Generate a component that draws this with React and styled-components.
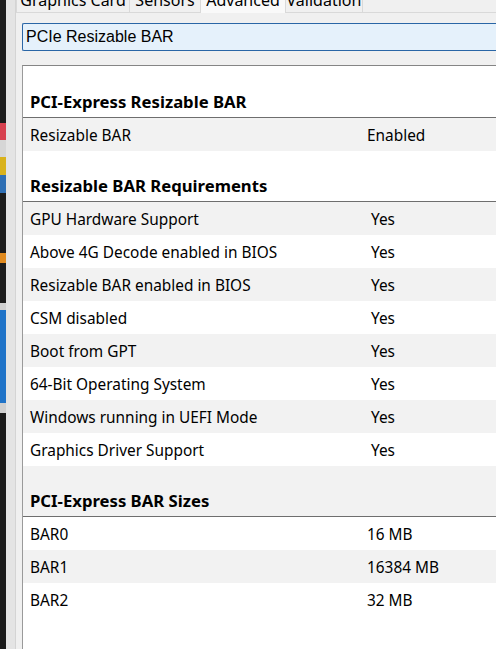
import React from "react";
import styled, { createGlobalStyle } from "styled-components";

const Global = createGlobalStyle`
  html, body { margin: 0; padding: 0; background: #f0f0f0; overflow: hidden; }
  body { width: 496px; height: 649px; font-family: "Noto Sans", "Segoe UI", sans-serif; color: #000; }
`;

const Screen = styled.div`
  display: flex;
  width: 496px;
  height: 649px;
  overflow: hidden;
`;

const Desktop = styled.div`
  width: 6px;
  flex: none;
  background: #1c1c1c;
  display: flex;
  flex-direction: column;
`;

const DesktopBlock = styled.div`
  flex: none;
  height: ${(p) => p.$h}px;
  background: ${(p) => p.$c};
`;

const Frame = styled.div`
  width: 9px;
  flex: none;
  background: #e4e4e4;
  border-right: 1px solid #d4d4d4;
`;

const Window = styled.div`
  flex: 1;
  min-width: 0;
  display: flex;
  flex-direction: column;
  background: #f0f0f0;
`;

const TabBar = styled.div`
  display: flex;
  height: 12px;
  border-bottom: 1px solid #d9d9d9;
  flex: none;
`;

const Tab = styled.div`
  flex: none;
  width: ${(p) => p.$w}px;
  height: ${(p) => (p.$active ? 13 : 12)}px;
  box-sizing: border-box;
  display: flex;
  align-items: flex-end;
  justify-content: center;
  padding-bottom: ${(p) => (p.$active ? 3 : 2)}px;
  background: ${(p) => (p.$active ? "#f9f9f9" : "#f0f0f0")};
  border-left: 1px solid #d9d9d9;
  border-right: ${(p) => (p.$last ? "1px solid #d9d9d9" : "none")};
  font-size: 16px;
  white-space: nowrap;
  position: relative;
  z-index: ${(p) => (p.$active ? 1 : 0)};
`;

const TabLabel = styled.span`
  line-height: 20px;
`;

const Body = styled.div`
  flex: 1;
  min-height: 0;
  display: flex;
  flex-direction: column;
  padding: 10px 0 0 6px;
`;

const SelectBox = styled.div`
  flex: none;
  height: 26px;
  display: flex;
  align-items: center;
  padding-left: 3px;
  background: #e5f1fb;
  border: 1px solid #2a66a6;
  border-right: none;
  border-radius: 2px 0 0 2px;
  font-family: "Liberation Sans", Arial, sans-serif;
  font-size: 16px;
`;

const Panel = styled.div`
  flex: 1;
  min-height: 0;
  margin-top: 14px;
  padding-top: 1px;
  background: #fff;
  border-top: 1px solid #858585;
  border-left: 1px solid #9a9a9a;
  display: flex;
  flex-direction: column;
`;

const Header = styled.div`
  flex: none;
  height: 45px;
  display: flex;
  align-items: flex-end;
  padding: 0 0 5px 7px;
  border-bottom: 1px solid #6e6e6e;
  background: ${(p) => (p.$alt ? "#f2f2f2" : "#fff")};
  font-weight: 700;
  font-size: 16.7px;
`;

const HeaderText = styled.span`
  line-height: 20px;
  white-space: nowrap;
`;

const Row = styled.div`
  flex: none;
  box-sizing: border-box;
  height: 33px;
  padding: 2px 0 0 7px;
  display: grid;
  grid-template-columns: ${(p) => p.$col}px 1fr;
  align-items: center;
  background: ${(p) => (p.$alt ? "#f2f2f2" : "#fff")};
  font-size: 15.4px;
  white-space: nowrap;
`;

const tabs = [
  { label: "Graphics Card", w: 113 },
  { label: "Sensors", w: 71 },
  { label: "Advanced", w: 85, active: true },
  { label: "Validation", w: 78, last: true },
];

const sections = [
  {
    title: "PCI-Express Resizable BAR",
    col: 337,
    rows: [["Resizable BAR", "Enabled"]],
  },
  {
    title: "Resizable BAR Requirements",
    col: 341,
    rows: [
      ["GPU Hardware Support", "Yes"],
      ["Above 4G Decode enabled in BIOS", "Yes"],
      ["Resizable BAR enabled in BIOS", "Yes"],
      ["CSM disabled", "Yes"],
      ["Boot from GPT", "Yes"],
      ["64-Bit Operating System", "Yes"],
      ["Windows running in UEFI Mode", "Yes"],
      ["Graphics Driver Support", "Yes"],
    ],
  },
  {
    title: "PCI-Express BAR Sizes",
    col: 337,
    rows: [
      ["BAR0", "16 MB"],
      ["BAR1", "16384 MB"],
      ["BAR2", "32 MB"],
    ],
  },
];

const desktop = [
  [123, "#1c1c1c"],
  [17, "#d7414f"],
  [17, "#d6d6d6"],
  [18, "#d9b21c"],
  [18, "#2f6fb4"],
  [60, "#1c1c1c"],
  [10, "#e08a1f"],
  [40, "#1c1c1c"],
  [7, "#d0d0d0"],
  [93, "#1f73c8"],
  [10, "#cfcfcf"],
  [236, "#1a1a1a"],
];

export default function App() {
  let idx = 0;
  return (
    <>
      <Global />
      <Screen>
        <Desktop>
          {desktop.map(([h, c], i) => (
            <DesktopBlock key={i} $h={h} $c={c} />
          ))}
        </Desktop>
        <Frame />
        <Window>
          <TabBar>
            {tabs.map((t) => (
              <Tab key={t.label} $w={t.w} $active={t.active} $last={t.last}>
                <TabLabel>{t.label}</TabLabel>
              </Tab>
            ))}
          </TabBar>
          <Body>
            <SelectBox>PCIe Resizable BAR</SelectBox>
            <Panel>
              {sections.map((s) => {
                const hi = idx++;
                return (
                  <React.Fragment key={s.title}>
                    <Header $alt={hi % 2 === 1}>
                      <HeaderText>{s.title}</HeaderText>
                    </Header>
                    {s.rows.map(([l, v]) => {
                      const ri = idx++;
                      return (
                        <Row key={l} $col={s.col} $alt={ri % 2 === 1}>
                          <span>{l}</span>
                          <span>{v}</span>
                        </Row>
                      );
                    })}
                  </React.Fragment>
                );
              })}
            </Panel>
          </Body>
        </Window>
      </Screen>
    </>
  );
}
